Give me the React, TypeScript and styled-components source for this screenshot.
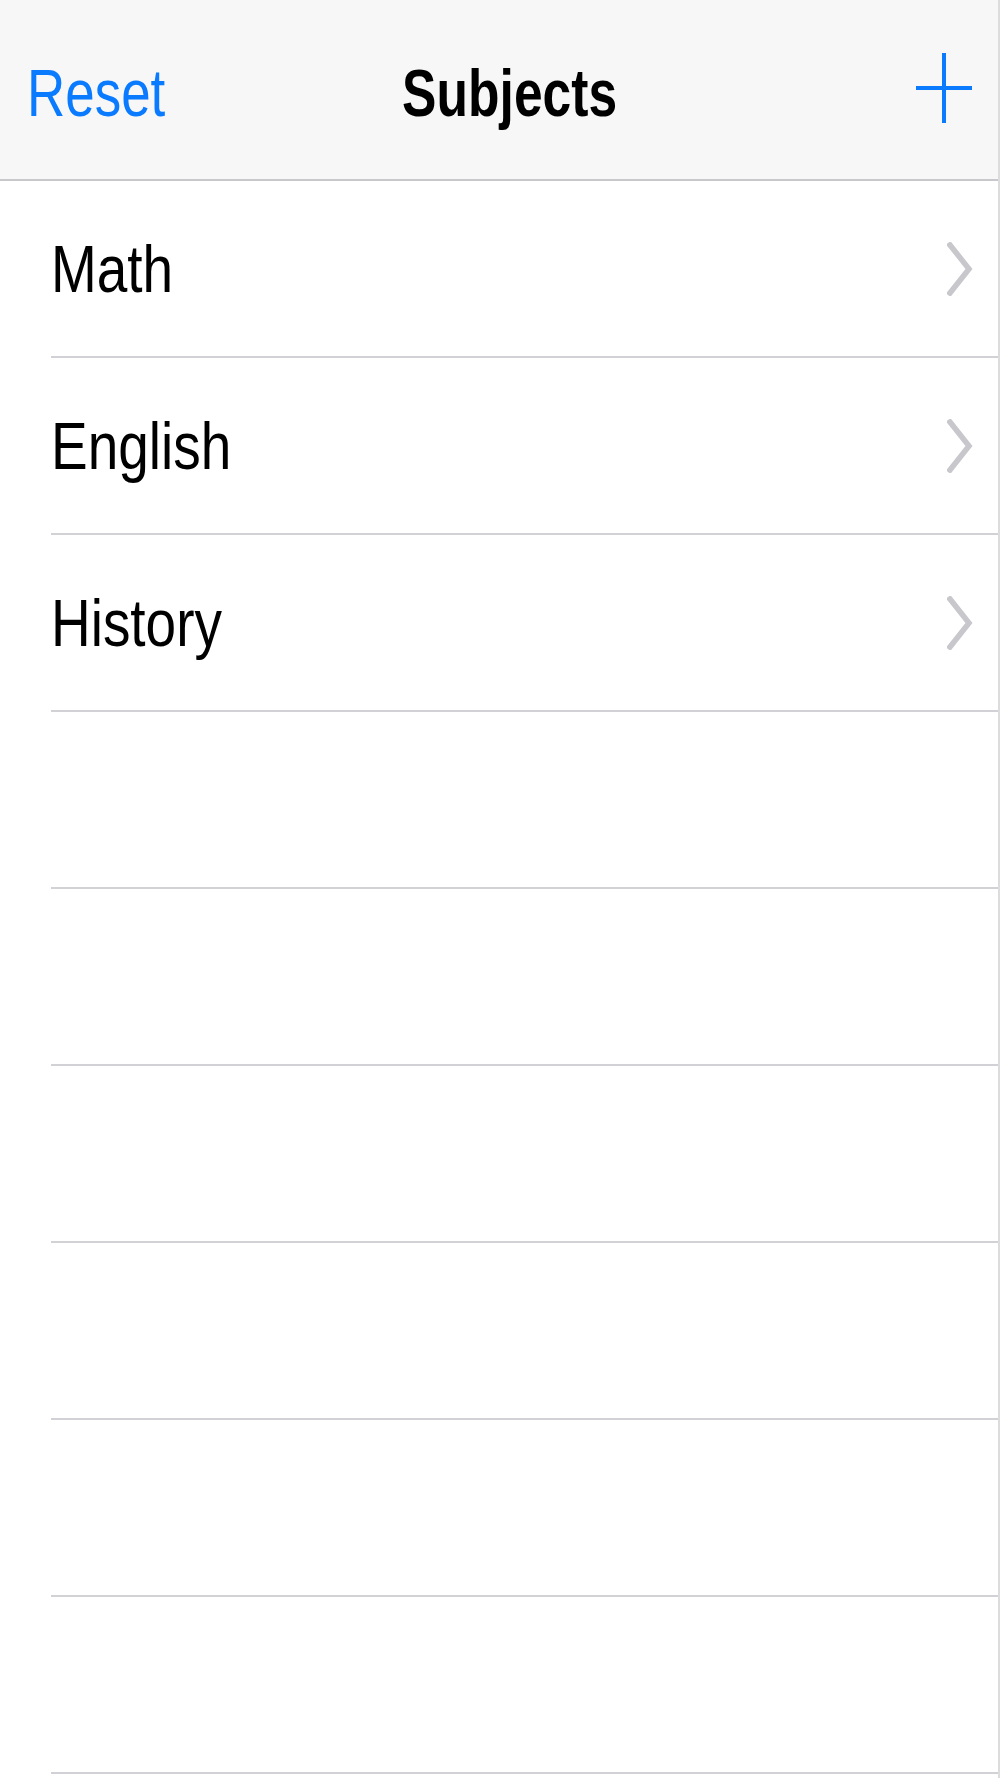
import React from 'react';
import styled, { createGlobalStyle } from 'styled-components';

const GlobalStyle = createGlobalStyle`
  html, body {
    margin: 0;
    padding: 0;
    background: #fff;
  }
  body {
    font-family: 'Liberation Sans', Arial, sans-serif;
  }
`;

const SScreen = styled.div`
  width: 1000px;
  min-height: 1778px;
  box-sizing: border-box;
  border-right: 2px solid #dcdcdf;
  background: #fff;
  overflow: hidden;
`;

const SNavBar = styled.div`
  height: 181px;
  box-sizing: border-box;
  background: #f7f7f7;
  border-bottom: 2px solid #c8c7cc;
  display: grid;
  grid-template-columns: 1fr auto 1fr;
  align-items: center;
`;

const SNavButton = styled.div`
  justify-self: start;
  padding: 6px 0 0 0;
  margin-left: 27px;
  color: #0a7aff;
  font-size: 67px;
  line-height: 67px;
  transform: scaleX(0.79);
  transform-origin: left center;
  white-space: nowrap;
`;

const STitle = styled.div`
  margin-left: 22px;
  padding-top: 6px;
  color: #000;
  font-size: 67px;
  font-weight: 700;
  line-height: 67px;
  transform: scaleX(0.77);
  transform-origin: center center;
  white-space: nowrap;
`;

const SAddButton = styled.div`
  justify-self: end;
  display: flex;
  margin: 0 26px 4px 0;
  color: #0a7aff;
`;

const SList = styled.div`
  display: flex;
  flex-direction: column;
`;

const SRow = styled.div<{ $empty?: boolean }>`
  height: 177px;
  box-sizing: border-box;
  margin-left: 51px;
  padding-right: 25px;
  border-bottom: 2px solid #d1d1d6;
  display: flex;
  align-items: center;
  justify-content: space-between;
`;

const SLabel = styled.div`
  color: #000;
  font-size: 67px;
  line-height: 67px;
  transform: scaleX(0.82);
  transform-origin: left center;
  white-space: nowrap;
`;

const Chevron = () => (
  <svg width="26" height="54" viewBox="0 0 26 54" fill="none">
    <polyline points="3,3 22,27 3,51" stroke="#c7c7cc" strokeWidth="5.5" strokeLinecap="square" />
  </svg>
);

const Plus = () => (
  <svg width="56" height="70" viewBox="0 0 56 70" fill="none">
    <line x1="28" y1="0" x2="28" y2="70" stroke="currentColor" strokeWidth="4" />
    <line x1="0" y1="35" x2="56" y2="35" stroke="currentColor" strokeWidth="4" />
  </svg>
);

const subjects = ['Math', 'English', 'History'];
const EMPTY_ROWS = 6;

const App = () => (
  <>
    <GlobalStyle />
    <SScreen>
      <SNavBar>
        <SNavButton>Reset</SNavButton>
        <STitle>Subjects</STitle>
        <SAddButton>
          <Plus />
        </SAddButton>
      </SNavBar>
      <SList>
        {subjects.map((name) => (
          <SRow key={name}>
            <SLabel>{name}</SLabel>
            <Chevron />
          </SRow>
        ))}
        {Array.from({ length: EMPTY_ROWS }).map((_, i) => (
          <SRow key={`empty-${i}`} $empty />
        ))}
      </SList>
    </SScreen>
  </>
);

export default App;
